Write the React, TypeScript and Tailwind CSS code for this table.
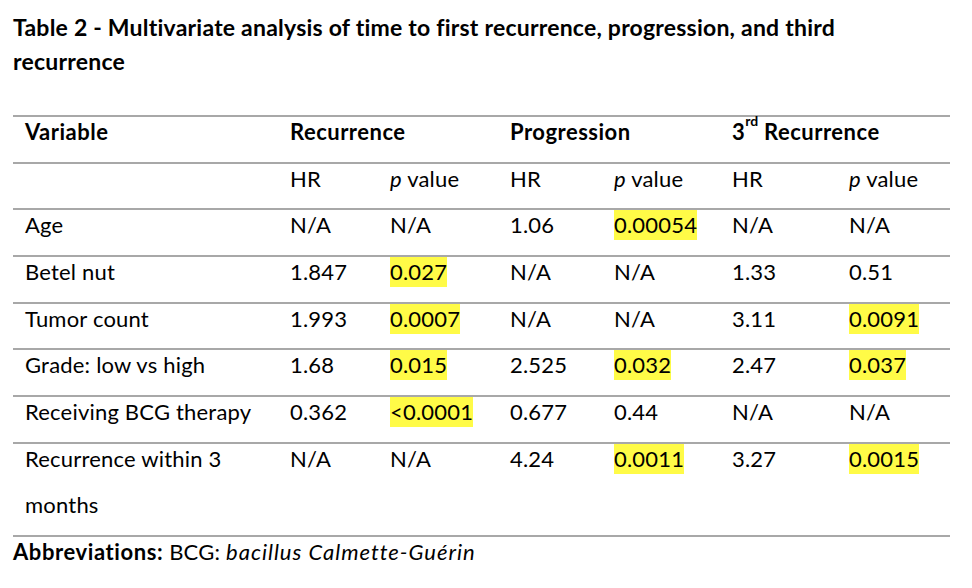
import React from 'react';

type Cell = { text: React.ReactNode; hl?: boolean };

const cols = 'grid grid-cols-[265px_100px_120px_104px_118px_117px_113px]';

const rows: { label: React.ReactNode; cells: Cell[] }[] = [
  {
    label: 'Age',
    cells: [{ text: 'N/A' }, { text: 'N/A' }, { text: '1.06' }, { text: '0.00054', hl: true }, { text: 'N/A' }, { text: 'N/A' }],
  },
  {
    label: 'Betel nut',
    cells: [{ text: '1.847' }, { text: '0.027', hl: true }, { text: 'N/A' }, { text: 'N/A' }, { text: '1.33' }, { text: '0.51' }],
  },
  {
    label: 'Tumor count',
    cells: [{ text: '1.993' }, { text: '0.0007', hl: true }, { text: 'N/A' }, { text: 'N/A' }, { text: '3.11' }, { text: '0.0091', hl: true }],
  },
  {
    label: 'Grade: low vs high',
    cells: [{ text: '1.68' }, { text: '0.015', hl: true }, { text: '2.525' }, { text: '0.032', hl: true }, { text: '2.47' }, { text: '0.037', hl: true }],
  },
  {
    label: 'Receiving BCG therapy',
    cells: [{ text: '0.362' }, { text: '<0.0001', hl: true }, { text: '0.677' }, { text: '0.44' }, { text: 'N/A' }, { text: 'N/A' }],
  },
];

const CellBox: React.FC<{ children: React.ReactNode; hl?: boolean }> = ({ children, hl }) => (
  <div className="pl-[12px] leading-[30px] pb-[14.7px] whitespace-nowrap">
    {hl ? <span className="inline-block bg-[#fffb47] leading-[30px]">{children}</span> : children}
  </div>
);

export default function App() {
  return (
    <div className="w-[972px] h-[588px] bg-white text-black pl-[13px] pt-[10px] font-['Lato','Noto_Sans',sans-serif] text-[22px] tracking-[0.2px] overflow-hidden">
      {/* Title */}
      <h1 className="font-bold text-[23px] leading-[34px] whitespace-nowrap tracking-[0.22px]">
        Table 2 - Multivariate analysis of time to first recurrence, progression, and third
        <br />
        recurrence
      </h1>

      {/* Table */}
      <div className="mt-[37px] w-[937px]">
        <div className={`${cols} border-t-2 border-[#a8a8a8] font-bold tracking-[0.5px]`}>
          <CellBox>Variable</CellBox>
          <div className="col-span-2">
            <CellBox>Recurrence</CellBox>
          </div>
          <div className="col-span-2">
            <CellBox>Progression</CellBox>
          </div>
          <div className="col-span-2">
            <CellBox>
              3<sup className="text-[14px] align-[7px] tracking-normal">rd</sup> Recurrence
            </CellBox>
          </div>
        </div>

        <div className={`${cols} border-t-2 border-[#a8a8a8]`}>
          <CellBox>{''}</CellBox>
          <CellBox>HR</CellBox>
          <CellBox><i>p</i> value</CellBox>
          <CellBox>HR</CellBox>
          <CellBox><i>p</i> value</CellBox>
          <CellBox>HR</CellBox>
          <CellBox><i>p</i> value</CellBox>
        </div>

        {rows.map((r, i) => (
          <div key={i} className={`${cols} border-t-2 border-[#a8a8a8]`}>
            <CellBox>{r.label}</CellBox>
            {r.cells.map((c, j) => (
              <CellBox key={j} hl={c.hl}>{c.text}</CellBox>
            ))}
          </div>
        ))}

        <div className={`${cols} border-t-2 border-b-2 border-[#a8a8a8]`}>
          <div className="pl-[12px] leading-[30px] pb-[14.7px] flex flex-col gap-[16px]">
            <span>Recurrence within 3</span>
            <span>months</span>
          </div>
          <CellBox>N/A</CellBox>
          <CellBox>N/A</CellBox>
          <CellBox>4.24</CellBox>
          <CellBox hl>0.0011</CellBox>
          <CellBox>3.27</CellBox>
          <CellBox hl>0.0015</CellBox>
        </div>
      </div>

      {/* Footnote */}
      <p className="leading-[30px]">
        <span className="font-bold tracking-[0.6px]">Abbreviations:</span> BCG:{' '}
        <i className="tracking-[1px]">bacillus Calmette-Guérin</i>
      </p>
    </div>
  );
}
